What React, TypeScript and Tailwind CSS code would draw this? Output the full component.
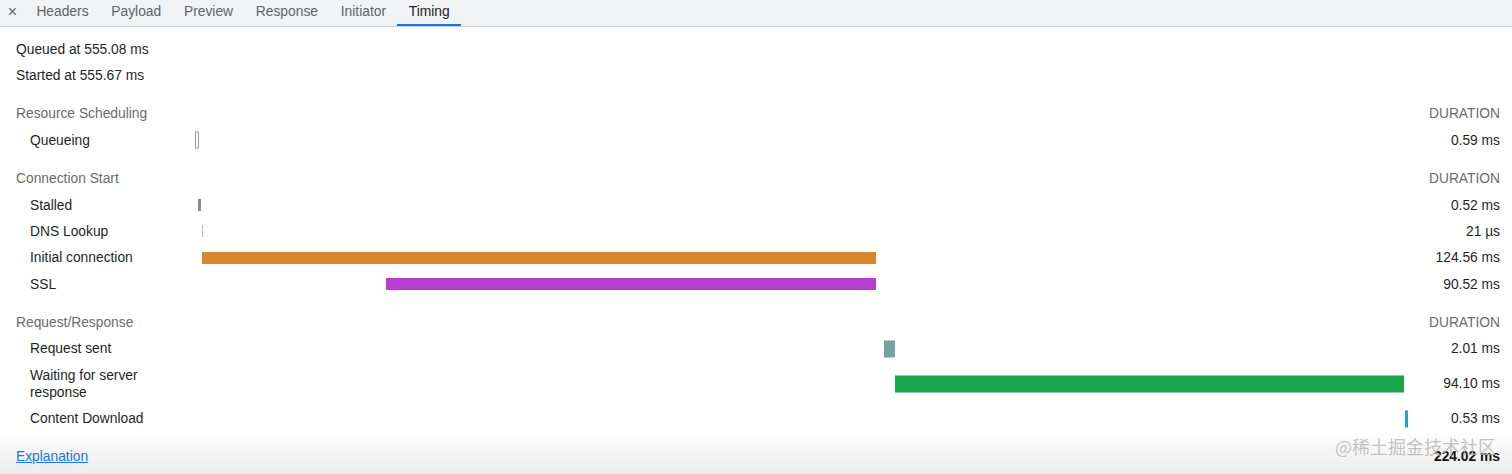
import React from "react";

type Row = {
  label: string;
  start: number;
  dur: number;
  text: string;
  color: string;
  tall?: boolean;
  outline?: boolean;
  minW?: number;
};

type Section = { title: string; rows: Row[] };

const SCALE = 5.41; // px per ms on the waterfall

const sections: Section[] = [
  {
    title: "Resource Scheduling",
    rows: [{ label: "Queueing", start: -0.15, dur: 0.59, text: "0.59 ms", color: "#ffffff", tall: true, outline: true, minW: 4 }],
  },
  {
    title: "Connection Start",
    rows: [
      { label: "Stalled", start: 0.45, dur: 0.52, text: "0.52 ms", color: "#8c8c8c", minW: 3 },
      { label: "DNS Lookup", start: 1.05, dur: 0.021, text: "21 µs", color: "#a6c6c4", minW: 1 },
      { label: "Initial connection", start: 1.13, dur: 124.56, text: "124.56 ms", color: "#d98829" },
      { label: "SSL", start: 35.17, dur: 90.52, text: "90.52 ms", color: "#b63fd0" },
    ],
  },
  {
    title: "Request/Response",
    rows: [
      { label: "Request sent", start: 127.2, dur: 2.01, text: "2.01 ms", color: "#77a19e", tall: true },
      { label: "Waiting for server response", start: 129.2, dur: 94.1, text: "94.10 ms", color: "#1aa64b", tall: true },
      { label: "Content Download", start: 223.5, dur: 0.53, text: "0.53 ms", color: "#2a9bd7", tall: true, minW: 3 },
    ],
  },
];

const tabs = ["Headers", "Payload", "Preview", "Response", "Initiator", "Timing"];

function TimingRow({ row }: { row: Row }) {
  const left = row.start * SCALE;
  const width = Math.max(row.dur * SCALE, row.minW ?? 1);
  return (
    <div className="flex items-center py-[4.7px] leading-[17px]">
      <div className="w-[180px] shrink-0 pl-[14px] pr-[20px] text-[#1f1f1f]">{row.label}</div>
      <div className="relative flex-1 self-stretch">
        <div
          className={
            "absolute top-1/2 -translate-y-1/2 " +
            (row.tall ? "h-[17px] " : "h-[12px] ") +
            (row.outline ? "border border-[#9a9a9a]" : "")
          }
          style={{ left, width, backgroundColor: row.color }}
        />
      </div>
      <div className="w-[90px] shrink-0 text-right text-[#1f1f1f]">{row.text}</div>
    </div>
  );
}

export default function App() {
  return (
    <div className="relative flex h-screen w-full flex-col overflow-hidden bg-white font-['Liberation_Sans',Arial,sans-serif] text-[13.8px]">
      {/* Tab strip */}
      <div className="flex h-[27px] shrink-0 items-stretch border-b border-[#cbcdd1] bg-[#f1f3f4]">
        <div className="flex w-[25px] items-center justify-center pb-[2px] text-[16px] text-[#5f6368]">×</div>
        {tabs.map((t) => (
          <div
            key={t}
            className={
              "flex items-center border-b-2 px-[11.4px] " +
              (t === "Timing" ? "border-[#1a73e8] text-[#202124]" : "border-transparent text-[#5f6368]")
            }
          >
            {t}
          </div>
        ))}
      </div>

      {/* Body */}
      <div className="flex flex-col pl-4 pr-3 pt-[9px]">
        <div className="py-[4.7px] leading-[17px] text-[#1f1f1f]">Queued at 555.08 ms</div>
        <div className="py-[4.7px] leading-[17px] text-[#1f1f1f]">Started at 555.67 ms</div>

        {sections.map((s) => (
          <div key={s.title} className="mt-[12px] flex flex-col">
            <div className="flex items-center justify-between py-[4.7px] leading-[17px] text-[#6b6b6b]">
              <span>{s.title}</span>
              <span>DURATION</span>
            </div>
            {s.rows.map((r) => (
              <TimingRow key={r.label} row={r} />
            ))}
          </div>
        ))}
      </div>

      {/* Footer */}
      <div className="flex flex-1 flex-col bg-gradient-to-b from-white to-[#ebebeb] pl-4 pr-3 pt-[11px]">
        <div className="flex items-center justify-between py-[4.7px] leading-[17px]">
          <a className="text-[#1a73e8] underline">Explanation</a>
          <span className="font-bold text-[#111]">224.02 ms</span>
        </div>
      </div>

      {/* Watermark */}
      <div className="pointer-events-none absolute right-[16px] top-[433px] font-['Noto_Sans_CJK_SC',sans-serif] text-[18px] text-[#b4b4b4]/80">
        @稀土掘金技术社区
      </div>
    </div>
  );
}
